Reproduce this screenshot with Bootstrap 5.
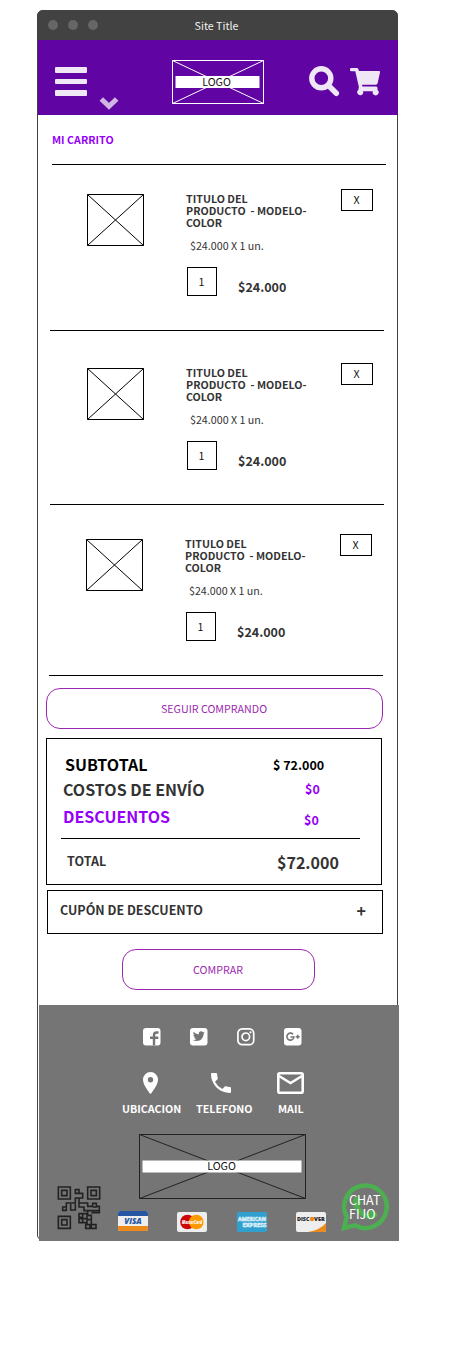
<!DOCTYPE html>
<html lang="es">
<head>
<meta charset="utf-8">
<meta name="viewport" content="width=device-width, initial-scale=1">
<title>Mi carrito</title>
<link href="https://cdn.jsdelivr.net/npm/bootstrap@5.3.0/dist/css/bootstrap.min.css" rel="stylesheet">
<style>
body{font-family:"Noto Sans CJK SC","Noto Sans",sans-serif;font-size:10.7px;line-height:12px;color:#333;background:#fff}
svg{display:block;flex:none}
.phone{width:361px;height:1231px;margin:10px 0 0 37px;border:1px solid #424242;border-radius:6px}
.titlebar{height:30px;margin:-1px -1px 0;padding:2px 2px 0 0;background:#424242;border-radius:6px 6px 0 0;color:#f0f0f0}
.dots{left:11px;top:10px;gap:10px}
.dots i{width:10px;height:10px;border-radius:50%;background:#666}
.topnav{height:75px;margin-right:-1px;padding:20px 18px 0 17px;background:#6005a4}
.burger{margin-top:7px}
.caret{left:61px;top:56px}
.heading{margin:19px 0 0 14px;color:#9600fa}
.rule{height:1px;background:#000}
.item{width:334px;height:142px;border-bottom:1px solid #000;padding-left:37px}
.item-photo{margin-top:5px}
.item-body{margin-left:42px;width:130px;padding-top:4px}
.unit{margin:11px 0 0 4px}
.amount{margin-top:15px}
.price{margin:12px 0 0 21px}
.box{border:1px solid #000;color:#111}
.qty{width:30px;height:29px;margin-left:1px;padding-right:1px}
.kill{width:32px;height:22px;margin-left:25px;padding-right:1px}
.t14{font-size:12.5px;line-height:16px}
.t18{font-size:16px;line-height:20px}
.violet{color:#9600fa}
.pill{border:1px solid #9c27b0;border-radius:14px;color:#9c27b0;height:41px;background:none;font-size:10.7px;line-height:12px;padding:0 1px 0 0}
.totals{width:336px;height:147px;margin:9px 0 0 8px;padding:15px 21px 0 14px}
.totals .t18{height:20px}
.coupon{width:336px;height:44px;margin:5px 0 0 9px;padding:0 16px 4px 12px}
.foot{height:236px;margin:15px -2px 0 1px;background:#757575;color:#fff}
.social{padding:23px 0 0 104px;gap:29px}
.contact{margin:26px 0 0 83px}
</style>
</head>
<body>
<main class="phone">
  <div class="titlebar position-relative d-flex justify-content-center align-items-center">
    <div class="dots position-absolute d-flex"><i></i><i></i><i></i></div>Site Title
  </div>
  <nav class="topnav position-relative d-flex align-items-start">
    <svg class="burger" width="32" height="29" fill="#efe6f6"><rect width="32" height="6" rx="1"/><rect y="12" width="32" height="5" rx="1"/><rect y="23" width="32" height="6" rx="1"/></svg>
    <svg class="caret position-absolute" width="20" height="14" viewBox="0 0 20 14"><path d="M2.300 3 10 10.300 17.700 3" fill="none" stroke="#cfb4e4" stroke-width="5"/></svg>
    <svg style="margin-left:85px" width="92" height="44"><path d="M.5.5h91v43H.5zL91.500 43.500M91.500.5.5 43.500" fill="none" stroke="#fff"/><path fill="#fff" d="M3.500 16h84v12h-84z"/><text x="44.500" y="26" text-anchor="middle" fill="#111" font-size="10.700">LOGO</text></svg>
    <svg style="margin:6px 0 0 45px" width="31" height="31" viewBox="0 0 31 31" fill="none" stroke="#efe6f6"><circle cx="12.300" cy="12.300" r="9.500" stroke-width="5.400"/><path d="m20 20 7.300 7.300" stroke-width="5.500" stroke-linecap="round"/></svg>
    <svg style="margin:8px 0 0 10px" width="31" height="28" viewBox="0 0 31 28" fill="#efe6f6"><path d="M1.500 0H7q1 0 1.300 1l.7 2h20q1.300 0 1 1.300L27.700 15q-.4 1.700-2 1.700H12l.4 1.700H26q1.500 0 1.500 1.600v2a3 3 0 1 1-4.600 1.200H13a3 3 0 1 1-4.700-1.300l.6-2.900L5.300 3.300H1.500a1.600 1.600 0 0 1 0-3.300z"/></svg>
  </nav>
  <div class="heading fw-bold">MI CARRITO</div>
  <div class="rule" style="width:334px;margin:18px 0 0 14px"></div>

  <section class="item d-flex align-items-start" style="margin:24px 0 0 12px">
    <svg class="item-photo" width="57" height="52"><path d="M.5.5h56v51H.5zL56.500 51.500M56.500.5.5 51.500" fill="none" stroke="#000"/></svg>
    <div class="item-body"><div class="fw-bold">TITULO DEL<br>PRODUCTO &nbsp;- MODELO-<br>COLOR</div>
      <div class="unit">$24.000 X 1 un.</div>
      <div class="amount d-flex"><div class="box qty d-flex align-items-center justify-content-center">1</div><b class="t14 price">$24.000</b></div></div>
    <div class="box kill d-flex align-items-center justify-content-center">X</div>
  </section>
  <section class="item d-flex align-items-start" style="margin:32px 0 0 12px">
    <svg class="item-photo" width="57" height="52"><path d="M.5.5h56v51H.5zL56.500 51.500M56.500.5.5 51.500" fill="none" stroke="#000"/></svg>
    <div class="item-body"><div class="fw-bold">TITULO DEL<br>PRODUCTO &nbsp;- MODELO-<br>COLOR</div>
      <div class="unit">$24.000 X 1 un.</div>
      <div class="amount d-flex"><div class="box qty d-flex align-items-center justify-content-center">1</div><b class="t14 price">$24.000</b></div></div>
    <div class="box kill d-flex align-items-center justify-content-center">X</div>
  </section>
  <section class="item d-flex align-items-start" style="margin:29px 0 0 11px">
    <svg class="item-photo" width="57" height="52"><path d="M.5.5h56v51H.5zL56.500 51.500M56.500.5.5 51.500" fill="none" stroke="#000"/></svg>
    <div class="item-body"><div class="fw-bold">TITULO DEL<br>PRODUCTO &nbsp;- MODELO-<br>COLOR</div>
      <div class="unit">$24.000 X 1 un.</div>
      <div class="amount d-flex"><div class="box qty d-flex align-items-center justify-content-center">1</div><b class="t14 price">$24.000</b></div></div>
    <div class="box kill d-flex align-items-center justify-content-center">X</div>
  </section>

  <button class="pill d-block" style="width:337px;margin:12px 0 0 8px">SEGUIR COMPRANDO</button>

  <section class="box totals fw-bold">
    <div class="d-flex t18" style="padding-left:4px;color:#000"><span style="width:208px">SUBTOTAL</span><span class="t14" style="padding-top:3px">$ 72.000</span></div>
    <div class="d-flex t18" style="padding-left:2px;margin-top:5px;color:#333"><span style="width:242px">COSTOS DE ENVÍO</span><span class="t14 violet" style="padding-top:2px">$0</span></div>
    <div class="d-flex t18 violet" style="padding-left:2px;margin-top:7px"><span style="width:241px">DESCUENTOS</span><span class="t14" style="padding-top:6px">$0</span></div>
    <div class="rule" style="margin-top:12px"></div>
    <div class="d-flex t18" style="padding-left:6px;margin-top:13px;color:#333"><span class="t14" style="width:210px;padding-top:1px">TOTAL</span><span>$72.000</span></div>
  </section>
  <section class="box coupon fw-bold d-flex justify-content-between align-items-center" style="color:#333"><span class="t14">CUPÓN DE DESCUENTO</span><span class="t18">+</span></section>
  <button class="pill d-block" style="width:193px;margin:15px 0 0 84px">COMPRAR</button>

  <footer class="foot position-relative">
    <div class="social d-flex">
      <svg width="18" height="18" viewBox="0 0 18 18"><rect width="17.500" height="17.500" rx="3" fill="#fff"/><path d="M11 17.500V7.200q0-2.700 2.700-2.700h1.800M7 9.700h8.300" fill="none" stroke="#757575" stroke-width="2.400"/></svg>
      <svg width="18" height="18" viewBox="0 0 18 18"><rect width="17.500" height="17.500" rx="3" fill="#fff"/><path transform="translate(2.800 2.200) scale(.5)" fill="#757575" d="M24 4.600c-.9.400-1.800.7-2.800.8 1-.6 1.800-1.600 2.200-2.700-1 .6-2 1-3.100 1.200A4.900 4.900 0 0 0 11.800 8.400C7.700 8.200 4.100 6.300 1.700 3.200a4.900 4.900 0 0 0 1.500 6.600c-.8 0-1.600-.2-2.200-.6v.1c0 2.300 1.600 4.300 3.900 4.700-.7.200-1.500.2-2.200.1.600 2 2.400 3.400 4.600 3.400A9.900 9.900 0 0 1 0 19.500 14 14 0 0 0 7.500 21.700c9.100 0 14.300-7.700 14-14.600 1-.7 1.800-1.600 2.500-2.500z"/></svg>
      <svg width="18" height="18" viewBox="0 0 18 18" fill="none" stroke="#fff" stroke-width="1.700"><rect x=".9" y=".9" width="15.800" height="15.800" rx="4.300"/><circle cx="8.800" cy="8.800" r="3.800"/><circle cx="13.500" cy="4.300" r="1.100" fill="#fff" stroke="none"/></svg>
      <svg width="18" height="18" viewBox="0 0 18 18"><rect width="17.500" height="17.500" rx="3" fill="#fff"/><path d="M9 6.300A3.500 3.500 0 1 0 9.900 9H6.500M11.700 8.800h4M13.700 6.800v4" fill="none" stroke="#757575" stroke-width="1.600"/></svg>
    </div>
    <div class="contact d-flex fw-bold">
      <div style="width:74px"><svg style="margin:0 0 9px 21px" width="15" height="22" viewBox="5 2 14 20" preserveAspectRatio="none"><path fill="#fff" d="M12 2a7 7 0 0 0-7 7c0 5.250 7 13 7 13s7-7.750 7-13a7 7 0 0 0-7-7zm0 9.500a2.500 2.500 0 1 1 0-5 2.500 2.500 0 0 1 0 5z"/></svg>UBICACION</div>
      <div style="width:82px"><svg style="margin:1px 0 10px 15px" width="20" height="20" viewBox="3 3 18 18"><path fill="#fff" d="M6.620 10.790a15.050 15.050 0 0 0 6.590 6.590l2.200-2.200c.27-.27.67-.36 1.020-.24 1.120.37 2.330.57 3.570.57.550 0 1 .45 1 1V20c0 .55-.45 1-1 1A17 17 0 0 1 3 4c0-.55.450-1 1-1h3.500c.55 0 1 .45 1 1 0 1.250.2 2.450.57 3.570.11.350.03.740-.25 1.020z"/></svg>TELEFONO</div>
      <div><svg style="margin:0 0 9px -1px" width="27" height="22" viewBox="0 0 27 22" fill="none" stroke="#fff" stroke-width="2.600"><rect x="1.300" y="1.300" width="24.400" height="19.400" rx="1.500"/><path d="m2 4 11.500 7L25 4"/></svg>MAIL</div>
    </div>
    <svg style="margin:19px 0 0 100px" width="167" height="65"><path d="M.5.5h166v64H.5zL166.500 64.500M166.500.5.5 64.500" fill="none" stroke="#222"/><path fill="#fff" d="M3.500 26.500h159v12h-159z"/><text x="82.500" y="36" text-anchor="middle" fill="#111" font-size="10.700">LOGO</text></svg>
    <svg class="position-absolute" style="left:18px;top:181px" width="44" height="44" viewBox="81 198 132 132" fill="none" stroke="#222" stroke-width="4.800"><path d="M85 201h36v36H85zM95 211h16v16H95zM173 201h36v36h-36zM183 211h16v16h-16zM85 289h36v36H85zM95 299h16v16H95zM136 209h11v11h-11zM147 220h11v14h-11v15h26v10h15v-9h11v11h-11M147 234h-11v15h-27v12M98 261h11v10H98zM122 252v18h14v-18M147 249v12h15v11h46v-13h-9M173 272v14h11M208 261v17h-24M147 281h11v11h-11zM158 281h13v15h-13zM147 296h11v12h-11zM158 308h13v-12M171 286h13v13h-13v12M184 299v15M167 314h13v11h-13zM184 314h14v11h-14z"/></svg>
    <div class="position-absolute d-flex" style="left:79px;top:206px;gap:29px">
      <svg width="30" height="20" viewBox="0 0 30 20"><rect width="30" height="20" rx="2" fill="#eee"/><path d="M0 5V2q0-2 2-2h26q2 0 2 2v3z" fill="#2557a4"/><path d="M0 15v3q0 2 2 2h26q2 0 2-2v-3z" fill="#ec8a1c"/><text x="15" y="12.900" text-anchor="middle" font-family="Open Sans" font-size="8" font-weight="800" font-style="italic" fill="#2557a4">VISA</text></svg>
      <svg style="margin-top:1px" width="30" height="20" viewBox="0 0 30 20"><rect width="30" height="20" rx="2" fill="#eee"/><circle cx="10.500" cy="10" r="7.300" fill="#cc0605"/><circle cx="19.300" cy="10" r="7.300" fill="#f90"/><text x="5" y="11.800" textLength="20" lengthAdjust="spacingAndGlyphs" font-family="Open Sans" font-size="4.500" font-weight="800" font-style="italic" fill="#fff">MasterCard</text></svg>
      <svg style="margin:1px 0 0 1px" width="30" height="20" viewBox="0 0 30 20"><rect width="30" height="20" rx="2" fill="#32a0cf"/><g fill="#32a0cf" stroke="#d5edf7" stroke-width=".7" font-family="Open Sans" font-size="5.500" font-weight="700"><text x="1" y="9.300" textLength="28" lengthAdjust="spacingAndGlyphs">AMERICAN</text><text x="5.500" y="14.800" textLength="24" lengthAdjust="spacingAndGlyphs">EXPRESS</text></g></svg>
      <svg style="margin-top:1px" width="30" height="20" viewBox="0 0 30 20"><rect width="30" height="20" rx="2" fill="#eee"/><path d="M12 20q12-2 18-9v7q0 2-2 2z" fill="#ec8a1c"/><circle cx="16" cy="7" r="2.200" fill="#ec8a1c"/><g font-family="Open Sans" font-size="5.200" font-weight="800" fill="#222"><text x="1" y="8.900" textLength="12.500" lengthAdjust="spacingAndGlyphs">DISC</text><text x="18" y="8.900" textLength="10.800" lengthAdjust="spacingAndGlyphs">VER</text></g></svg>
    </div>
    <div class="position-absolute" style="left:302px;top:178px">
      <svg width="48" height="48" viewBox="0 0 48 48"><path d="M5.800 34A21.300 21.300 0 1 1 14 42.300L3 45z" fill="none" stroke="#4caf50" stroke-width="4.500"/><path fill="#4caf50" d="M14 14q2-2 4 0l2.500 5q.5 1-2 4 3 5.500 8 8l3-3.500q.8-.7 2 0l4 2q1.500 1 .3 3.500-2.500 4.500-8 3.500Q16 33 12 22q-1-5 2-8z"/></svg>
      <div class="position-absolute" style="left:8px;top:10px;font-size:12.500px;line-height:14px">CHAT<br>FIJO</div>
    </div>
  </footer>
</main>
<script src="https://cdn.jsdelivr.net/npm/bootstrap@5.3.0/dist/js/bootstrap.bundle.min.js"></script>
</body>
</html>
